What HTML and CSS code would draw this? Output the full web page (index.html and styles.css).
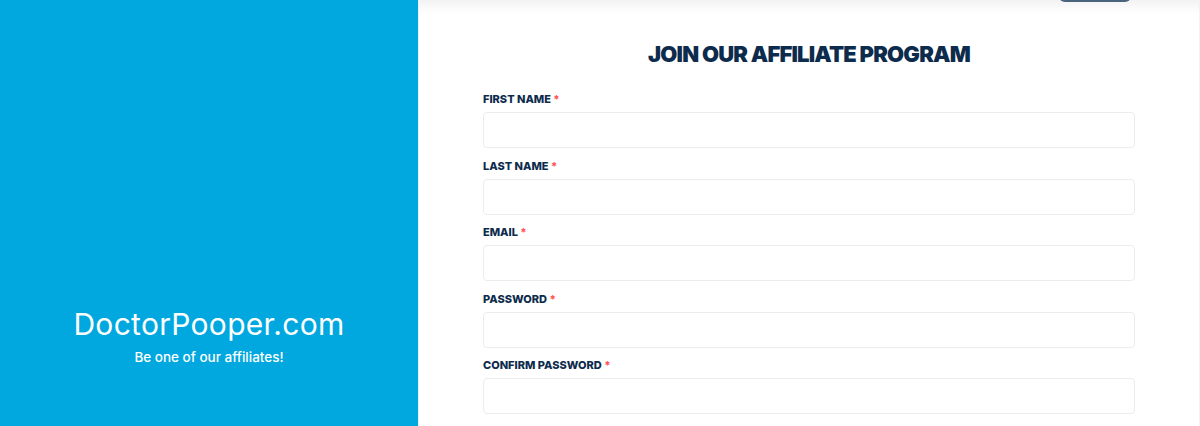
FILE: index.html
```html
<!DOCTYPE html>
<html>
<head>
<meta charset="utf-8">
<link rel="stylesheet" href="styles.css">
</head>
<body>
<div class="page">
  <aside class="brand">
    <div class="brand-name">DoctorPooper.com</div>
    <div class="brand-tag">Be one of our affiliates!</div>
  </aside>
  <main class="main">
    <div class="header-btn"></div>
    <h1 class="title">JOIN OUR AFFILIATE PROGRAM</h1>
    <form class="form">
      <div class="field">
        <label class="label">FIRST NAME <span class="req">*</span></label>
        <input class="input" type="text">
      </div>
      <div class="field">
        <label class="label">LAST NAME <span class="req">*</span></label>
        <input class="input" type="text">
      </div>
      <div class="field">
        <label class="label">EMAIL <span class="req">*</span></label>
        <input class="input" type="text">
      </div>
      <div class="field">
        <label class="label">PASSWORD <span class="req">*</span></label>
        <input class="input" type="password">
      </div>
      <div class="field">
        <label class="label">CONFIRM PASSWORD <span class="req">*</span></label>
        <input class="input" type="password">
      </div>
    </form>
  </main>
</div>
</body>
</html>
```
FILE: styles.css
```css
html, body {
  margin: 0;
  padding: 0;
  height: 426px;
  overflow: hidden;
  background: #fff;
}
.page {
  display: flex;
  height: 426px;
  font-family: "Inter", "Liberation Sans", sans-serif;
}
.brand {
  width: 418px;
  flex: none;
  background: #00a8df;
  color: #fff;
  display: flex;
  flex-direction: column;
  align-items: center;
  padding-top: 306px;
  box-sizing: border-box;
}
.brand-name {
  font-size: 30px;
  font-weight: 400;
  letter-spacing: 0.3px;
  line-height: 36px;
}
.brand-tag {
  font-size: 13.5px;
  font-weight: 500;
  margin-top: 7px;
  line-height: 16px;
}
.main {
  flex: 1;
  position: relative;
  padding: 0 64px;
  box-shadow: inset 0 14px 14px -10px rgba(0,0,0,0.07);
  border-left: 1px solid #e6f4fb;
  border-right: 1px solid #f2f2f2;
}
.header-btn {
  position: absolute;
  top: -10px;
  left: 640px;
  width: 72px;
  height: 12px;
  background: #4b647e;
  border-radius: 6px;
}
.title {
  margin: 39px 0 0;
  text-align: center;
  font-size: 22px;
  font-weight: 900;
  color: #0d2b4c;
  letter-spacing: -0.8px;
  line-height: 30px;
}
.form {
  margin-top: 23px;
  display: flex;
  flex-direction: column;
  gap: 10.5px;
}
.field {
  display: flex;
  flex-direction: column;
  gap: 6px;
}
.label {
  font-size: 11px;
  font-weight: 800;
  color: #0d2b4c;
  line-height: 14px;
}
.req {
  color: #ff5252;
}
.input {
  height: 36px;
  box-sizing: border-box;
  border: 1px solid #ececec;
  border-radius: 4px;
  background: #fff;
  margin: 0;
  padding: 0 10px;
}
```
